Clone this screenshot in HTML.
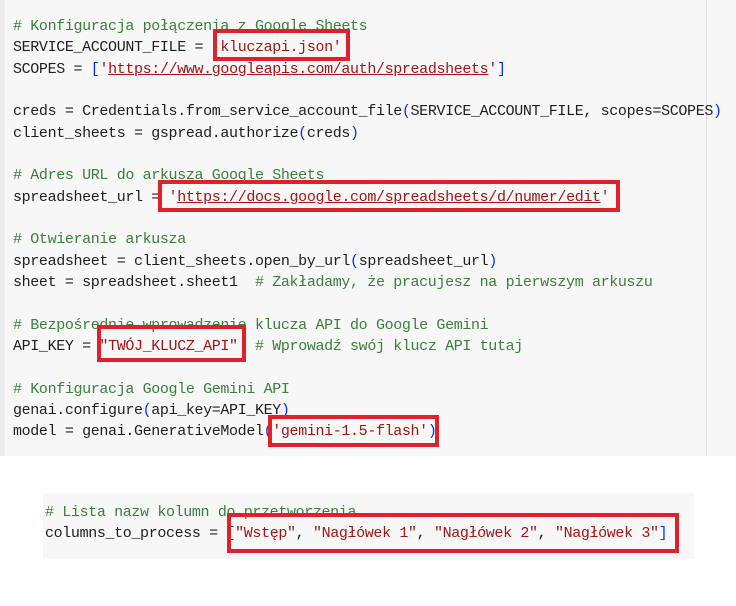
<!DOCTYPE html>
<html><head><meta charset="utf-8"><style>
body{margin:0;width:736px;height:606px;background:#fff;position:relative;overflow:hidden;font-family:"Liberation Mono","DejaVu Sans Mono",monospace;}
.p1{position:absolute;left:0;top:0;width:736px;height:456px;background:#f7f7f7;}
.strip{position:absolute;left:0;top:0;width:5px;height:456px;background:#ececec;}
.vl{position:absolute;left:706px;top:0;width:1px;height:456px;background:#dcdcdc;}
.p2{position:absolute;left:43px;top:493px;width:651px;height:66px;background:#f7f7f7;}
pre{margin:0;position:absolute;font-family:inherit;font-size:15px;letter-spacing:-0.36px;line-height:21.33px;color:#1f1f1f;white-space:pre;}
.c{color:#3a7f3a}.s{color:#a31515}.b{color:#0431fa}.u{text-decoration:underline;text-decoration-color:#a31515}
.r{position:absolute;border:4px solid #e0202a;box-sizing:border-box;}
</style></head><body>
<div class="p1"></div><div class="strip"></div><div class="vl"></div>
<div class="p2"></div>
<pre style="left:13px;top:16px"><span class="c"># Konfiguracja połączenia z Google Sheets</span>
SERVICE_ACCOUNT_FILE = <span class="s">'kluczapi.json'</span>
SCOPES = <span class="b">[</span><span class="s">'<span class="u">https://www.googleapis.com/auth/spreadsheets</span>'</span><span class="b">]</span>

creds = Credentials.from_service_account_file<span class="b">(</span>SERVICE_ACCOUNT_FILE, scopes=SCOPES<span class="b">)</span>
client_sheets = gspread.authorize<span class="b">(</span>creds<span class="b">)</span>

<span class="c"># Adres URL do arkusza Google Sheets</span>
spreadsheet_url = <span class="s">'<span class="u">https://docs.google.com/spreadsheets/d/numer/edit</span>'</span>

<span class="c"># Otwieranie arkusza</span>
spreadsheet = client_sheets.open_by_url<span class="b">(</span>spreadsheet_url<span class="b">)</span>
sheet = spreadsheet.sheet1  <span class="c"># Zakładamy, że pracujesz na pierwszym arkuszu</span>

<span class="c"># Bezpośrednie wprowadzenie klucza API do Google Gemini</span>
API_KEY = <span class="s">"TWÓJ_KLUCZ_API"</span>  <span class="c"># Wprowadź swój klucz API tutaj</span>

<span class="c"># Konfiguracja Google Gemini API</span>
genai.configure<span class="b">(</span>api_key=API_KEY<span class="b">)</span>
model = genai.GenerativeModel<span class="b">(</span><span class="s">'gemini-1.5-flash'</span><span class="b">)</span></pre>
<pre style="left:45px;top:502px"><span class="c"># Lista nazw kolumn do przetworzenia</span>
columns_to_process = <span class="b">[</span><span class="s">"Wstęp"</span>, <span class="s">"Nagłówek 1"</span>, <span class="s">"Nagłówek 2"</span>, <span class="s">"Nagłówek 3"</span><span class="b">]</span></pre>
<div class="r" style="left:213px;top:29px;width:137px;height:32px"></div>
<div class="r" style="left:158px;top:180px;width:462px;height:32px"></div>
<div class="r" style="left:97px;top:325px;width:149px;height:37px"></div>
<div class="r" style="left:268px;top:415px;width:171px;height:32px"></div>
<div class="r" style="left:227px;top:513px;width:452px;height:40px"></div>
</body></html>
